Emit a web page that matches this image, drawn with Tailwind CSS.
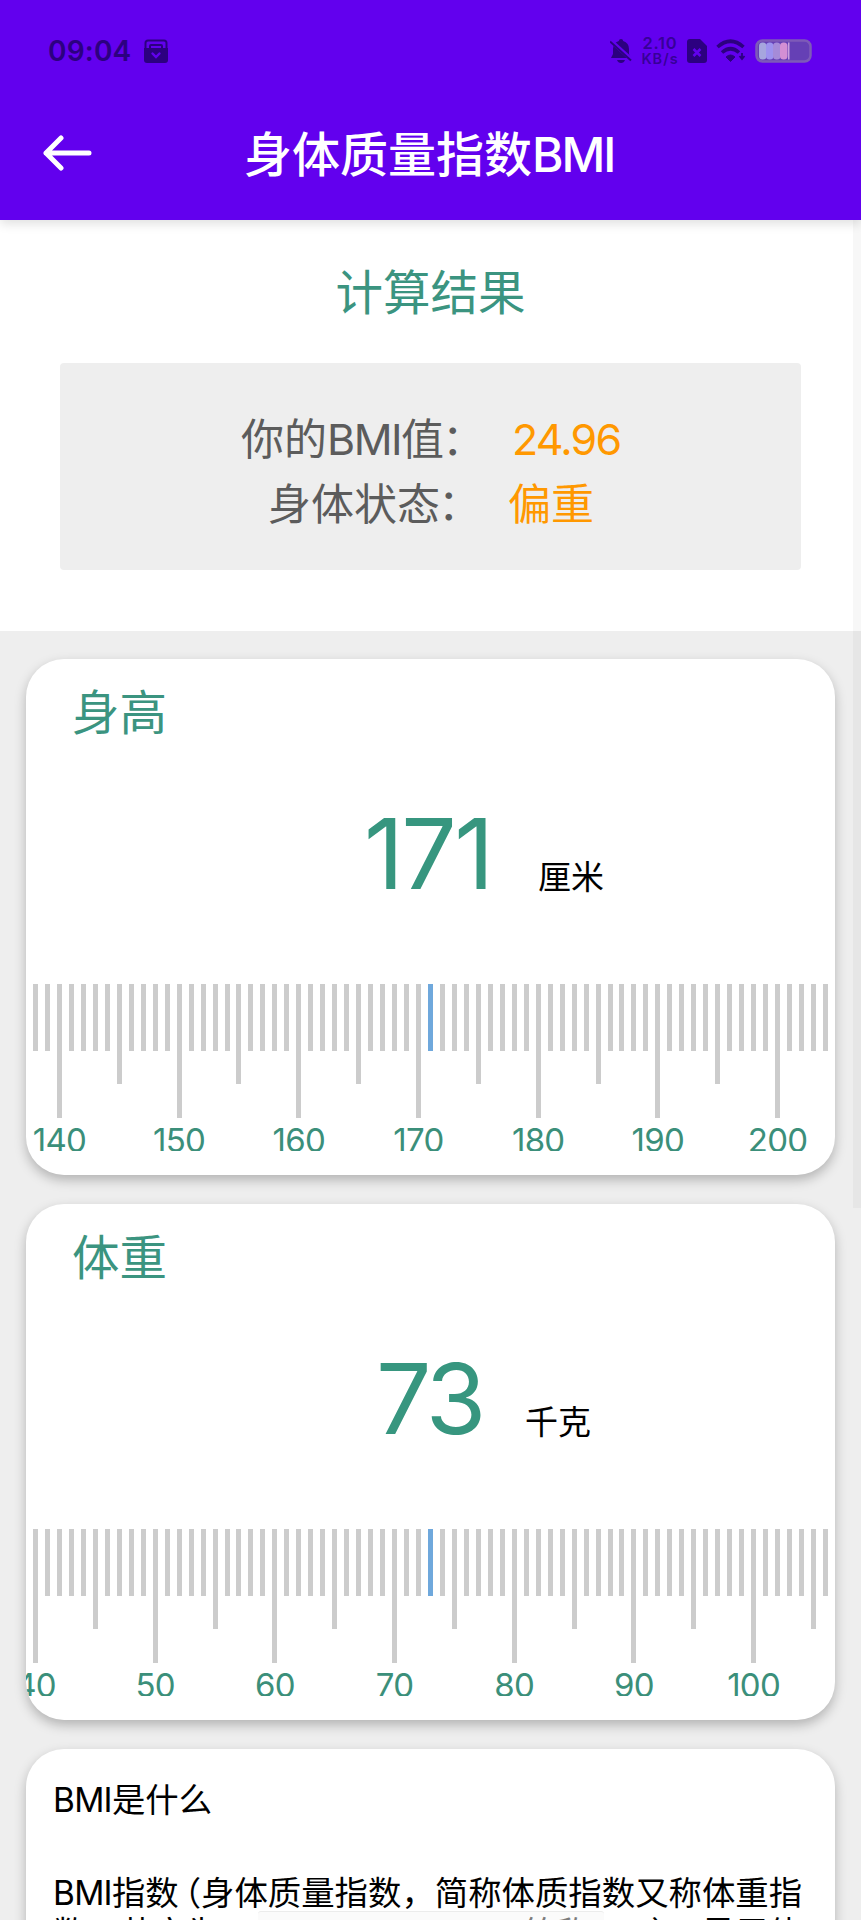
<!doctype html>
<html lang="zh-CN">

<head>
    <meta charset="UTF-8">
    <meta name="viewport" content="width=device-width, initial-scale=1.0">
    <title>身体质量指数BMI</title>
    <script src="https://cdn.jsdelivr.net/npm/@tailwindcss/browser@4"></script>
</head>

<body class="bg-[#eeeeee] font-['Inter','Noto_Sans_CJK_SC',sans-serif]">
    <div class="relative w-[861px] h-[1920px] overflow-hidden flex flex-col">

        <header class="relative z-10 h-[220px] shrink-0 bg-[#6200ee] shadow-[0_4px_10px_rgba(0,0,0,0.12)] flex flex-col">
            <!-- Status bar -->
            <div class="h-[102px] shrink-0 pl-12 pr-[49px] flex justify-between items-center text-[#2c0080]">
                <div class="flex items-center gap-[13px]">
                    <span class="text-[28px] leading-none font-semibold tracking-[0.2px] w-[83px] whitespace-nowrap">09:04</span>
                    <svg class="w-6 h-6" viewBox="0 0 24 24" fill="none">
                        <path d="M1.500 10V4q0-2.500 2.500-2.500h16q2.500 0 2.500 2.500v6" stroke="currentColor" stroke-width="2" />
                        <path d="M6 10V7q0-1 1-1h10q1 0 1 1v3" stroke="currentColor" stroke-width="2" />
                        <path d="M0 9h24v12q0 3-3 3H3q-3 0-3-3z" fill="currentColor" />
                        <path d="M8.500 14.500l3.500 3.500 3.500-3.500" stroke="#6200ee" stroke-width="2.400" stroke-linecap="round" />
                    </svg>
                </div>
                <div class="flex items-center">
                    <svg class="w-[22px] h-6" viewBox="0 0 22 24" fill="currentColor">
                        <path d="M11 0q2 0 2.200 2Q19 4 19 10v5l2 4H1l2-4v-5q0-6 5.800-8Q9 0 11 0z" />
                        <path d="M7 21h8q-1 3-4 3t-4-3z" />
                        <path d="M0 1l22 20" stroke="#6200ee" stroke-width="4" />
                        <path d="M0 2.500l21 19" stroke="currentColor" stroke-width="2" />
                    </svg>
                    <div class="w-9 ml-[10px] flex flex-col items-center text-[#2c0080]/80 whitespace-nowrap">
                        <span class="text-[16.500px] leading-[15px] font-semibold tracking-[0.8px]">2.10</span>
                        <span class="text-[14.500px] leading-[15px] font-semibold tracking-[1px]">KB/s</span>
                    </div>
                    <svg class="w-5 h-6 ml-[9px]" viewBox="0 0 20 24">
                        <path d="M3 0h10l7 7v14q0 3-3 3H3q-3 0-3-3V3q0-3 3-3z" fill="currentColor" />
                        <path d="M6.500 10l7 7m0-7l-7 7" stroke="#6200ee" stroke-width="2.500" />
                    </svg>
                    <svg class="w-[30px] h-6 ml-[9px]" viewBox="0 0 30 24" fill="none" stroke="currentColor" stroke-width="3.600">
                        <path d="M1.500 8Q14.500-3.500 27.500 8" />
                        <path d="M6 13.500q8.500-7.500 17 0" />
                        <path d="M10 18q4.500-4 9 0l-4.500 4.500z" fill="currentColor" stroke-width="1" />
                        <path d="M26 14v5m-2.500-2l2.500 3 2.500-3" stroke-width="1.800" />
                    </svg>
                    <svg class="w-[57px] h-6 ml-[9px]" viewBox="0 0 57 24">
                        <rect x="1.500" y="1.500" width="54" height="21" rx="6" fill="#6540b5" stroke="#7d5ab8" stroke-width="2.500" />
                        <rect x="4" y="3.500" width="7.500" height="17" rx="3.500" fill="#a6a6de" />
                        <rect x="11" y="3.500" width="7.500" height="17" rx="3.500" fill="#9d92ee" />
                        <rect x="18" y="3.500" width="7.500" height="17" rx="3.500" fill="#a58bd8" />
                        <rect x="25" y="3.500" width="7.500" height="17" rx="3.500" fill="#d38fd4" />
                        <rect x="33" y="3.500" width="1.500" height="17" fill="#c9a0dd" />
                    </svg>
                </div>
            </div>
            <!-- Title bar -->
            <div class="flex items-center h-[104px] pl-[42px]">
                <svg class="w-[50px] h-9 -mt-[2px]" viewBox="0 0 50 36" fill="none" stroke="white" stroke-width="5" stroke-linecap="round" stroke-linejoin="round">
                    <path d="M19 3L4 18l15 15M4 18h43" />
                </svg>
                <h1 class="ml-[152px] mt-[2px] text-[48px] leading-none font-medium text-white whitespace-nowrap">身体质量指数<span class="tracking-[-2px]">BMI</span></h1>
            </div>
        </header>

        <section class="h-[411px] shrink-0 bg-white flex flex-col items-center pt-[49px]">
            <h2 class="text-[47.500px] leading-[48px] text-[#3b9480]">计算结果</h2>
            <div class="mt-[46px] w-[741px] h-[207px] rounded bg-[#eeeeee] pt-[44px] text-[43px] leading-[65px] text-[#5c5c5c]">
                <p class="flex pl-[181px] whitespace-nowrap">
                    <span class="w-[271px]">你的<span class="tracking-[-1.500px]">BMI</span><span class="tracking-[-2px]">值：</span></span>
                    <span class="text-[#ff9800] tracking-[-1.800px]">24.96</span>
                </p>
                <p class="flex pl-[208px] whitespace-nowrap">
                    <span class="w-[240px]">身体状<span class="tracking-[-2px]">态：</span></span>
                    <span class="text-[#ff9800]">偏重</span>
                </p>
            </div>
        </section>

        <main class="px-[26px] pt-7 flex flex-col gap-[29px]">
            <div class="h-[516px] shrink-0 rounded-[38px] bg-white overflow-hidden shadow-[0_5px_12px_rgba(0,0,0,0.25)]">
                <h3 class="pt-[30px] pl-[46px] text-[47.500px] leading-[48px] text-[#3b9480]">身高</h3>
                <div class="h-[247px] pt-[57px] pl-[338px] flex items-baseline">
                    <span class="w-[174px] text-[98px] leading-[120px] tracking-[-2.500px] text-[#37967f] whitespace-nowrap">171</span>
                    <span class="text-[33px] text-black">厘米</span>
                </div>
                <div class="ruler mx-[7px] w-[795px] h-[167px] flex justify-between items-start" data-start="138" data-value="171"></div>
            </div>

            <div class="h-[516px] shrink-0 rounded-[38px] bg-white overflow-hidden shadow-[0_5px_12px_rgba(0,0,0,0.25)]">
                <h3 class="pt-[30px] pl-[46px] text-[47.500px] leading-[48px] text-[#3b9480]">体重</h3>
                <div class="h-[247px] pt-[57px] pl-[350px] flex items-baseline">
                    <span class="w-[149px] text-[98px] leading-[120px] tracking-[-4px] text-[#37967f] whitespace-nowrap">73</span>
                    <span class="text-[33px] text-black">千克</span>
                </div>
                <div class="ruler mx-[7px] w-[795px] h-[167px] flex justify-between items-start" data-start="40" data-value="73"></div>
            </div>

            <div class="h-[516px] shrink-0 rounded-[38px] bg-white shadow-[0_5px_12px_rgba(0,0,0,0.25)] pl-[27px] pt-[31px] text-[33.400px] leading-[40px] text-black whitespace-nowrap">
                <p><span class="tracking-[-0.700px]">BMI</span>是什么</p>
                <p class="mt-[53px]"><span class="tracking-[-0.700px]">BMI</span>指数<span class="-ml-[11px]">（</span>身体质量指数，简称体质指数又称体重指</p>
                <p>数，英文为Body Mass Index，简称BMI），是用体</p>
            </div>
        </main>

        <!-- Scrollbar track and gesture bar -->
        <div class="absolute right-0 top-[220px] w-2 h-[988px] bg-black/[0.03]"></div>
        <div class="absolute left-[258px] top-[1911px] w-[346px] h-[9px] rounded-t-[3px] bg-[#f8f8f8]/50 border-t border-[#ececec]"></div>
    </div>
</body>

</html>

<script>
    const rulers = document.querySelectorAll('.ruler')

    rulers.forEach(ruler => {
        const start = Number(ruler.dataset.start)
        const value = Number(ruler.dataset.value)

        for (let i = start; i < start + 67; i++) {
            const tick = document.createElement('div')
            tick.className = "w-[5px] shrink-0 h-full flex flex-col items-center"

            const line = document.createElement('div')
            if (i === value) {
                line.className = "w-[5px] shrink-0 h-[67px] bg-[#6fa8dc]"
            } else if (i % 10 === 0) {
                line.className = "w-[5px] shrink-0 h-[134px] bg-[#cccccc]"
            } else if (i % 5 === 0) {
                line.className = "w-[5px] shrink-0 h-[100px] bg-[#cccccc]"
            } else {
                line.className = "w-[5px] shrink-0 h-[67px] bg-[#cccccc]"
            }
            tick.append(line)

            // Only every tenth mark has a number
            if (i % 10 === 0) {
                const label = document.createElement('div')
                label.className = "w-[80px] shrink-0 h-[33px] overflow-hidden text-center text-[33px] leading-[45px] text-[#3b8f7a] tracking-[-0.700px]"
                label.innerText = i
                tick.append(label)
            }
            ruler.append(tick)
        }
    })
</script>
